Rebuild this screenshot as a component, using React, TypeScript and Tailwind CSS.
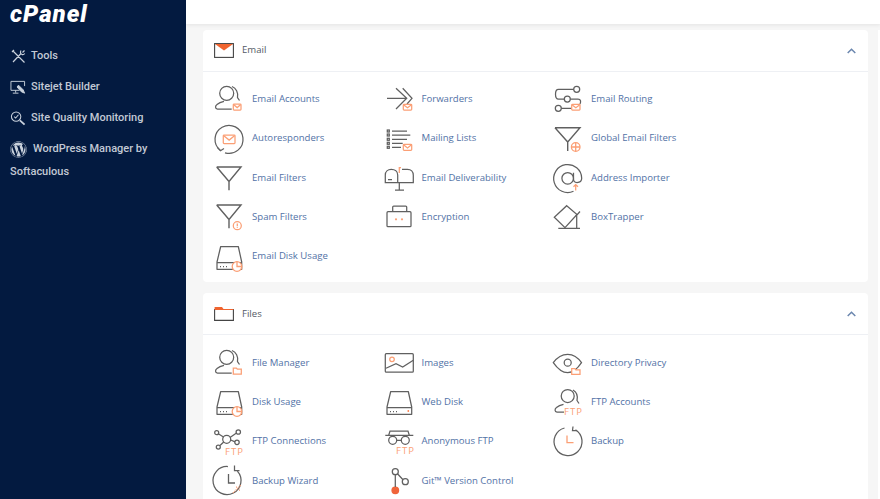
import React from "react";
import { FaWordpress } from "react-icons/fa";

const G = "#606060";
const O = "#fb9f75";

const Env = ({ x, y, w, h }: { x: number; y: number; w: number; h: number }) => (
  <g stroke={O} fill="#fff">
    <rect x={x} y={y} width={w} height={h} rx="0.8" />
    <path d={`M${x + 0.5} ${y + 0.8}L${x + w / 2} ${y + h * 0.6}L${x + w - 0.5} ${y + 0.8}`} fill="none" />
  </g>
);
const Folder = ({ x, y, w, h }: { x: number; y: number; w: number; h: number }) => (
  <path d={`M${x} ${y}h${w * 0.38}l1 1.2H${x + w}V${y + h}H${x}Z`} stroke={O} fill="#fff" />
);
const Ftp = ({ x, y }: { x: number; y: number }) => (
  <text x={x} y={y} fill={O} stroke="none" fontSize="9.5" letterSpacing="1" fontFamily="'Open Sans', sans-serif">FTP</text>
);
const Person = () => (
  <g>
    <circle cx="14.7" cy="10.3" r="7" />
    <path d="M20 3.500c4 1.500 6.500 6 5.500 11l2 3" />
    <path d="M19.700 26H5.500c-2.500 0-2.500-3-.5-4.500 2-1.700 4-2.500 7-3.200" />
  </g>
);
const Disk = ({ dot }: { dot?: boolean }) => (
  <g>
    <path d="M5 28.300V21L8.700 5.500H26.300L29.700 21V28.300Z" strokeLinejoin="round" />
    <path d="M5 21.500H29.700M8 25.500h1M11 25.500h1M14 25.500h1" />
    {dot && <circle cx="26.300" cy="25" r="0.900" fill="#fb7f4c" stroke="none" />}
  </g>
);
const Pie = () => (
  <g stroke={O} fill="#fff" strokeWidth="1.300">
    <circle cx="25" cy="25.500" r="4.800" />
    <path d="M25 20.700V25.500H29.800" fill="none" />
  </g>
);
const Funnel = ({ y = 0 }: { y?: number }) => (
  <path transform={`translate(0 ${y})`} d="M4.700 5H29L17 19.500V28.300M4.700 5L17 19.500" strokeWidth="1.400" />
);

const icons: Record<string, React.ReactNode> = {
  "Email Accounts": <><Person /><Env x={21.300} y={21} w={7.700} h={6} /></>,
  Autoresponders: <><path d="M8.500 27.500A14 14 0 1 1 13 29.800" /><path d="M5.500 24.500L8.500 27.800L12 25.500" /><Env x={11.300} y={12} w={11.700} h={8.500} /></>,
  "Email Filters": <Funnel />,
  "Spam Filters": <><Funnel y={-1} /><circle cx="25.300" cy="24.700" r="4" stroke={O} fill="#fff" /><path d="M25.300 22.500V25.300M25.300 26.200V27" stroke={O} /></>,
  "Email Disk Usage": <><Disk /><Pie /></>,
  Forwarders: <><path d="M5 15.300H24M14 5.300L24.700 15.300L14 26M20.700 5.300L30 15.300L25 21" /><Env x={21.300} y={21.300} w={8.400} h={5.800} /></>,
  "Mailing Lists": <><path d="M10 8H25M10 12H28.300M10 16.300H25M10 20.300H20.700M10 24.300H19" />{[8, 12, 16.300, 20.300, 24.300].map((y) => <rect key={y} x="5.300" y={y - 1} width="2" height="2" />)}<Env x={21.300} y={21.300} w={8.400} h={6} /></>,
  "Email Deliverability": <><path d="M3.300 20.700V13c0-3.500 2.500-5.700 6-5.700S15.700 9.500 15.700 13v7.700ZM20 7.300h5.500c3.500 0 5.800 2.500 5.800 6v7.400H15.700M6 17.500H10M17.300 20.700V28M13 28H22" /><path d="M17.300 11V5.500H19" stroke={O} /></>,
  Encryption: <><rect x="5" y="10.700" width="24" height="15" rx="1" /><path d="M10.700 10.700V6a1 1 0 0 1 1-1H23.700a1 1 0 0 1 1 1V10.700" /><circle cx="14" cy="18.300" r="1.100" fill={O} stroke="none" /><circle cx="20" cy="18.300" r="1.100" fill={O} stroke="none" /></>,
  "Email Routing": <><circle cx="29.700" cy="6.300" r="3" /><circle cx="20.300" cy="16" r="3" /><circle cx="11.300" cy="25.300" r="3" /><path d="M26.700 6.300H11.500C7.500 6.300 7.500 16 11.500 16H17.300M23.300 16H31C34 16 34 19 33 21M14.300 25.300H24.700" /><Env x={24.700} y={21.300} w={8.300} h={5.800} /></>,
  "Global Email Filters": <><path d="M8 4.700H33L20.700 19V28M8 4.700L20.700 19" strokeWidth="1.400" /><g stroke={O} fill="#fff" strokeWidth="1.300"><circle cx="28.700" cy="24" r="4.300" /><path d="M24.400 24H33M28.700 19.700V28.300" fill="none" /></g></>,
  "Address Importer": <><path d="M26.500 29.300A14 14 0 1 1 34.700 16.300C34.700 19 33 20.500 30 20.500" /><circle cx="20.700" cy="16.300" r="5.800" /><path d="M26.500 10.700V17C26.500 19 28 20.500 30 20.500" /><path d="M28.700 28.500V22.500M26.500 24.700L28.700 22.500L31 24.700" stroke={O} /></>,
  BoxTrapper: <><path d="M19.700 4.700L30 13.500L18 26.700L7.300 16.300Z" /><path d="M11.300 27.400H33M29.700 15V27.400M29 15L33 10.500" /></>,
  "File Manager": <><Person /><Folder x={21.300} y={21} w={8} h={6} /></>,
  "Disk Usage": <><Disk /><Pie /></>,
  "FTP Connections": <><circle cx="14.700" cy="14.300" r="4" /><circle cx="4.700" cy="7.700" r="2" /><circle cx="26.300" cy="7" r="2.200" /><circle cx="6.300" cy="22" r="2" /><circle cx="25" cy="17.300" r="2.200" /><path d="M6.300 8.700L11.500 12M24.500 8L18 12.500M8 20.500L11.700 17M23 16.800L18.700 15" /><Ftp x={13} y={29.500} /></>,
  "Backup Wizard": <><path d="M24 5A14 14 0 1 1 14 1.800" transform="rotate(8 17 15.300)" /><path d="M23.500 1.500V6.500H28.500" transform="translate(-1 -1)" /><path d="M16.500 9V18H23" strokeWidth="1.300" /><path d="M21 28L29 20M24 22h1M27 25h1" stroke={O} strokeDasharray="1 1" /></>,
  Images: <><rect x="3.300" y="6.700" width="28" height="18.500" rx="1" /><path d="M4 21.300L14 16.700L20.700 20L31.300 13.300" /><circle cx="10" cy="12.300" r="2.300" stroke={O} /></>,
  "Web Disk": <><Disk dot /></>,
  "Anonymous FTP": <><path d="M3.300 10.300H31.300M6.700 10.300L8 6H26L27.300 10.300M14.700 15.300H19.300" /><circle cx="10.700" cy="15.300" r="4" /><circle cx="23.300" cy="15.300" r="4" /><Ftp x={14} y={29} /></>,
  "Git™ Version Control": <><circle cx="13.300" cy="6.700" r="3" /><circle cx="23.300" cy="16.700" r="3" /><circle cx="13.300" cy="25.300" r="3.300" fill="#f0643a" stroke="#f0643a" /><path d="M13.300 9.700V22M15.500 8.800L21 14.700" /></>,
  "Directory Privacy": <><path d="M6.300 15.700C10 10.500 15 7.300 20.700 7.300S31 10.500 34.500 15.700C31 21 26 25.700 20.700 25.700S10 21 6.300 15.700Z" /><circle cx="20.700" cy="15.700" r="3.500" /><Folder x={24.700} y={21.700} w={8.300} h={5.600} /></>,
  "FTP Accounts": <><circle cx="20.700" cy="10" r="6.500" /><path d="M26 4c3.500 2 5 6 4 10.500l2 3M17 26H10c-2.500 0-2.500-3-.5-4.500 2-1.700 4-2.500 7-3.200" /><Ftp x={17} y={29.300} /></>,
  Backup: <><path d="M28.500 4.700A14 14 0 1 1 17.500 3" /><path d="M27 1.500L26.500 5.500H31" transform="translate(-1 0)" /><path d="M20 10.500V17.700H26.500" stroke={O} strokeWidth="1.300" /></>,
};

const thirdColumn = ["Email Routing", "Global Email Filters", "Address Importer", "BoxTrapper", "Directory Privacy", "FTP Accounts", "Backup"];

const Icon = ({ name }: { name: string }) => (
  <svg width="36" height="32" viewBox="0 0 36 32" fill="none" stroke={G} strokeWidth="1.250" className="shrink-0 overflow-visible">
    <g transform={thirdColumn.includes(name) ? "translate(-4 0)" : undefined}>{icons[name]}</g>
  </svg>
);

const Item = ({ name }: { name: string }) => (
  <div className="flex h-[39.3px] w-[169.5px] items-center gap-[4px]">
    <Icon name={name} />
    <span className="whitespace-nowrap text-[9.6px] text-[#5272a6]">{name}</span>
  </div>
);

const Chevron = () => (
  <svg width="9" height="6" viewBox="0 0 9 6" fill="none" stroke="#6a86ae" strokeWidth="1.500"><path d="M0.700 5L4.500 1.300L8.300 5" /></svg>
);

const Card = ({ title, icon, items }: { title: string; icon: React.ReactNode; items: string[] }) => (
  <section className="w-[665px] rounded-sm bg-white">
    <div className="flex h-[42px] items-center border-b border-[#eef0f4] pl-[11px] pr-[12px]">
      <span className="flex w-[28px] items-center">{icon}</span>
      <span className="text-[9.6px] text-[#555b66]">{title}</span>
      <span className="ml-auto flex pt-[1px]"><Chevron /></span>
    </div>
    <div className="grid grid-cols-[repeat(3,169.5px)] pb-[6.300px] pl-[9px] pt-[7.700px]">
      {items.map((n) => <Item key={n} name={n} />)}
    </div>
  </section>
);

const Nav = ({ icon, children }: { icon: React.ReactNode; children: React.ReactNode }) => (
  <div className="flex h-[31px] items-center gap-[5px] whitespace-nowrap pl-[10px]">
    <span className="flex w-[16px] justify-center">{icon}</span>
    <span>{children}</span>
  </div>
);

const S = "#c9d1dc";

export default function App() {
  return (
    <div className="flex h-[499px] w-[880px] overflow-hidden bg-[#f6f6f6] font-['Open_Sans',sans-serif]">
      <aside className="w-[186px] shrink-0 bg-[#031a40] font-['Roboto',sans-serif] text-[11px] font-medium text-[#c2c9d5]">
        <div className="h-[41px] pl-[10px] text-[24px] font-black italic leading-[29px] tracking-[1px] text-white">cPanel</div>
        <Nav icon={<svg width="15" height="15" viewBox="0 0 15 15" fill="none" stroke={S} strokeWidth="1.200"><path d="M2 13L10 4.500M13.500 1.500L11.500 3.500M10 1.500C9 3 9.500 5 11 5.500C12 6 13 5.500 13.800 4.500M1.500 1.500L13.500 13.500M1 3L3 1" /></svg>}>Tools</Nav>
        <Nav icon={<svg width="17" height="15" viewBox="0 0 17 15" fill="none" stroke={S} strokeWidth="1"><path d="M10 10.500H1V1H15.500V6M6 10.500V13M3 13.500H9" /><path d="M9 5L14 10L15.500 13.500L12 12L7.500 7Z" fill={S} /></svg>}>Sitejet Builder</Nav>
        <Nav icon={<svg width="17" height="17" viewBox="0 0 17 17" fill="none" stroke={S} strokeWidth="1.100"><circle cx="6.500" cy="6.500" r="5" /><path d="M4.500 6.500L6 8L9 4.500" /><path d="M10.500 10.500L15.500 15" strokeWidth="2" /></svg>}>Site Quality Monitoring</Nav>
        <div className="flex h-[31px] items-center gap-[6px] whitespace-nowrap pl-[10px]">
          <FaWordpress size={17} color={S} />
          <span>WordPress Manager by</span>
        </div>
        <div className="pl-[10px] leading-[14px]">Softaculous</div>
      </aside>
      <main className="flex-1">
        <div className="h-[24px] bg-white shadow-[0_1px_4px_rgba(0,0,0,0.08)]" />
        <div className="flex justify-between pl-[17px] pt-[6px]">
          <div className="flex flex-col gap-[11px]">
            <Card
              title="Email"
              icon={<svg width="20" height="15" viewBox="0 0 20 15"><rect x="0.600" y="0.600" width="18.800" height="13.800" fill="#fff" stroke="#444" strokeWidth="1.100" /><path d="M1 1H19L10 7.500Z" fill="#f0642f" /></svg>}
              items={["Email Accounts", "Forwarders", "Email Routing", "Autoresponders", "Mailing Lists", "Global Email Filters", "Email Filters", "Email Deliverability", "Address Importer", "Spam Filters", "Encryption", "BoxTrapper", "Email Disk Usage"]}
            />
            <Card
              title="Files"
              icon={<svg width="20" height="15" viewBox="0 0 20 15"><path d="M0.600 3.500H19.400V14.400H0.600Z" fill="#fff" stroke="#444" strokeWidth="1.100" /><path d="M0.600 1H8L9.500 3H19.400V4H0.600Z" fill="#f0642f" /></svg>}
              items={["File Manager", "Images", "Directory Privacy", "Disk Usage", "Web Disk", "FTP Accounts", "FTP Connections", "Anonymous FTP", "Backup", "Backup Wizard", "Git™ Version Control"]}
            />
          </div>
          <div className="w-[2px] bg-white" />
        </div>
      </main>
    </div>
  );
}
